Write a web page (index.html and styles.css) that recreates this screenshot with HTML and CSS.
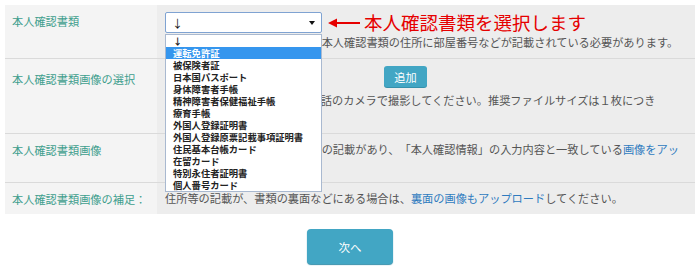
FILE: index.html
```html
<!DOCTYPE html>
<html lang="ja">
<head>
  <meta charset="UTF-8">
  <title>本人確認書類</title>
  <link rel="stylesheet" href="styles.css">
</head>
<body>
  <div class="page">
    <div class="form-table">

      <div class="form-row">
        <div class="form-label">本人確認書類</div>
        <div class="form-value">
          <div class="select-line">
            <div class="select-wrap">
              <div class="fake-select">
                <span class="select-text">↓</span>
                <svg class="caret" width="6" height="4" viewBox="0 0 6 4"><path d="M0 0h6L3 4z" fill="#111"/></svg>
              </div>
              <!-- 開いた状態のリスト -->
              <ul class="option-list">
                <li>↓</li>
                <li class="selected">運転免許証</li>
                <li>被保険者証</li>
                <li>日本国パスポート</li>
                <li>身体障害者手帳</li>
                <li>精神障害者保健福祉手帳</li>
                <li>療育手帳</li>
                <li>外国人登録証明書</li>
                <li>外国人登録原票記載事項証明書</li>
                <li>住民基本台帳カード</li>
                <li>在留カード</li>
                <li>特別永住者証明書</li>
                <li>個人番号カード</li>
              </ul>
            </div>
            <div class="note-red">
              <svg width="32" height="10" viewBox="0 0 32 10"><path d="M0 5l9-4.5v3.5h23v2H9v3.5z" fill="#e60000"/></svg>
              <span>本人確認書類を選択します</span>
            </div>
          </div>
          <p class="text first-gap">賃貸住宅にお住まいの場合は、本人確認書類の住所に部屋番号などが記載されている必要があります。</p>
        </div>
      </div>

      <div class="form-row">
        <div class="form-label label-low">本人確認書類画像の選択</div>
        <div class="form-value">
          <button class="add-btn">追加</button>
          <p class="text">デジタルカメラ、または携帯電話のカメラで撮影してください。推奨ファイルサイズは１枚につき<br>3MB以下です。</p>
        </div>
      </div>

      <div class="form-row">
        <div class="form-label">本人確認書類画像</div>
        <div class="form-value">
          <p class="text">氏名・住所・生年月日・顔写真の記載があり、「本人確認情報」の入力内容と一致している<a href="#">画像をアップロード</a>してください。</p>
        </div>
      </div>

      <div class="form-row">
        <div class="form-label">本人確認書類画像の補足：</div>
        <div class="form-value">
          <p class="text">住所等の記載が、書類の裏面などにある場合は、<a href="#">裏面の画像もアップロード</a>してください。</p>
        </div>
      </div>

    </div>

    <div class="actions">
      <button class="next-btn">次へ</button>
    </div>
  </div>
</body>
</html>
```

FILE: styles.css
```css
body {
  margin: 0;
  background: #ffffff;
  font-family: "Noto Sans CJK JP", "Liberation Sans", sans-serif;
  font-size: 11.2px;
  color: #555555;
  text-spacing-trim: space-all;
}

.page {
  padding: 5px;
}

.form-table {
  width: 690px;
}

.form-row {
  display: grid;
  grid-template-columns: 152px 1fr;
  border-bottom: 1px solid #dadada;
}

.form-row:last-child {
  border-bottom: none;
}

.form-label {
  background-color: #f4f4f4;
  color: #3e9e8d;
  padding: 8px 0 0 7px;
  line-height: 17px;
}

.label-low {
  padding-top: 12px;
}

.form-value {
  background-color: #ededed;
  padding: 7px 8px 7px 8px;
}

.text {
  margin: 0;
  line-height: 17px;
}

.first-gap {
  margin-top: 1px;
}

.text a {
  color: #2f7bbf;
  text-decoration: none;
}

/* セレクトボックス */
.select-line {
  display: flex;
  align-items: center;
  gap: 6px;
  height: 21px;
}

.select-wrap {
  position: relative;
}

.fake-select {
  box-sizing: border-box;
  width: 157px;
  height: 21px;
  background: #fff;
  border: 1px solid #7fa3d2;
  border-radius: 2px;
  display: flex;
  align-items: center;
  justify-content: space-between;
  padding: 0 6px 0 6px;
}

.select-text {
  font-family: "Noto Sans CJK JP", sans-serif;
  font-size: 11px;
  color: #111111;
}

.option-list {
  position: absolute;
  top: 22px;
  left: 0;
  box-sizing: border-box;
  width: 157px;
  margin: 0;
  padding: 0;
  list-style: none;
  background: #fff;
  border: 1px solid #a9b9d0;
  z-index: 5;
}

.option-list li {
  height: 12px;
  line-height: 12px;
  padding-left: 7px;
  font-size: 9.3px;
  font-weight: bold;
  color: #222;
  white-space: nowrap;
}

.option-list li.selected {
  background-color: #3596ee;
  color: #fff;
}

.note-red {
  display: flex;
  align-items: center;
  gap: 4px;
  color: #e60000;
  font-size: 18.5px;
  line-height: 21px;
  white-space: nowrap;
}

/* ボタン */
.add-btn {
  display: block;
  margin: 0 0 5px 219px;
  width: 43px;
  height: 21px;
  padding: 0;
  border: none;
  border-radius: 3px;
  background-color: #42a6c4;
  box-shadow: 0 1px 0 #3590ab;
  color: #fff;
  font-family: inherit;
  font-size: 11.2px;
}

.actions {
  display: flex;
  justify-content: center;
  margin-top: 15px;
}

.next-btn {
  width: 86px;
  height: 35px;
  border: none;
  border-radius: 4px;
  background-color: #42a6c4;
  box-shadow: 0 1px 1px #3590ab;
  color: #fff;
  font-family: inherit;
  font-size: 11.5px;
}
```
